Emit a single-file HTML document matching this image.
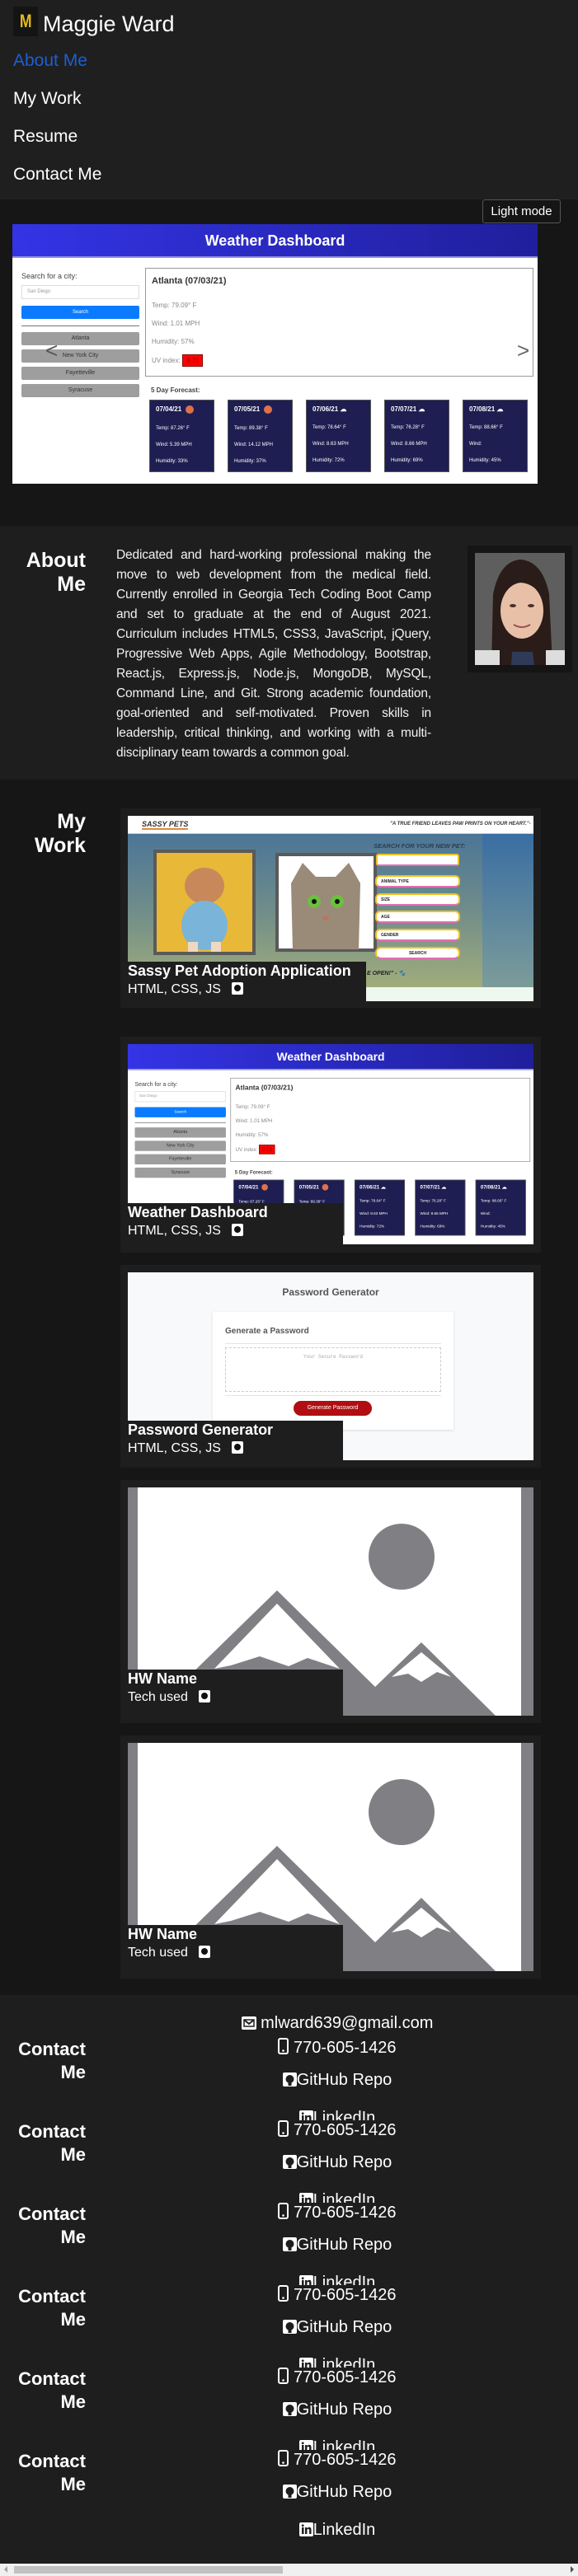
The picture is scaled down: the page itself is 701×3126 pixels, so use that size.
<!DOCTYPE html>
<html><head><meta charset="utf-8">
<style>
*{margin:0;padding:0;box-sizing:border-box}
html,body{width:701px;height:3126px;overflow:hidden;background:#161616;font-family:"Liberation Sans",sans-serif;color:#fff}
.a{position:absolute}
.hdr{left:0;top:0;width:701px;height:242px;background:#1f1f1f}
.nav{left:16px;font-size:21px;line-height:26px;color:#fff}
.wd{width:637px;height:315px;background:#fff;overflow:hidden;color:#444;font-family:"Liberation Sans",sans-serif}
.wd .hb{left:0;top:0;width:637px;height:41px;background:linear-gradient(90deg,#3434e6,#1f1f9c);text-align:center;font-weight:bold;font-size:18px;line-height:41px;color:#fff;border-bottom:2px solid #9090e0}
.cb{left:11px;width:143px;height:16px;background:#9e9e9e;border-radius:2px;font-size:7px;text-align:center;line-height:16px;color:#333}
.fc{top:213px;width:79px;height:88px;background:#1e1e52;border:1px solid #555;color:#fff;font-size:6px;padding:6px 7px}
.fc b{font-size:8px;display:block;margin-bottom:15px}
.fc div{margin-bottom:14px}
.sun{display:inline-block;width:10px;height:10px;border-radius:50%;background:#e0704a;vertical-align:middle;margin-left:5px}
.card{left:146px;width:510px;background:#1e1e1e}
.img{left:9px;top:9px;width:492px;overflow:hidden}
.cap{left:0;background:#1e1e1e;padding:0 0 0 0}
.cap .t{font-weight:bold;font-size:18px;line-height:22px;white-space:nowrap}
.cap .s{font-size:16px;line-height:24px;white-space:nowrap}
.gh{display:inline-block;width:14px;height:15px;background:#fff;border-radius:2px;vertical-align:-2px;margin-left:9px;position:relative}
.gh:after{content:"";position:absolute;left:3px;top:3px;width:8px;height:8px;border-radius:50%;background:#111}
.ch{left:0;width:104px;text-align:right;font-weight:bold;font-size:22px;line-height:28px}
.cl{left:141px;width:536px;text-align:center;font-size:20px;line-height:24px;white-space:nowrap}
.ico{display:inline-block;vertical-align:-2px}
</style></head><body>

<div class="a hdr"></div>
<div class="a" style="left:16px;top:8px;width:30px;height:36px;background:#141414"></div>
<div class="a" style="left:22px;top:13px;font-weight:bold;font-size:22px;color:#e6bb1c;font-family:'Liberation Sans Narrow','Liberation Sans',sans-serif;transform:scaleX(0.8)">M</div>
<div class="a" style="left:52px;top:13px;font-size:27px;line-height:32px">Maggie Ward</div>
<div class="a nav" style="top:61px;color:#1c5fd4">About Me</div>
<div class="a nav" style="top:107px">My Work</div>
<div class="a nav" style="top:153px">Resume</div>
<div class="a nav" style="top:199px">Contact Me</div>

<div class="a" style="left:585px;top:242px;width:95px;height:29px;border:1px solid #555;border-radius:3px;background:#151515;font-size:15px;line-height:27px;text-align:center">Light mode</div>

<!-- weather hero -->
<div class="a wd" id="w1" style="left:15px;top:272px">
 <div class="a hb">Weather Dashboard</div>
 <div class="a" style="left:11px;top:58px;font-size:9px;color:#444">Search for a city:</div>
 <div class="a" style="left:11px;top:74px;width:143px;height:17px;border:1px solid #ddd;font-size:6px;color:#999;line-height:15px;padding-left:6px">San Diego</div>
 <div class="a" style="left:11px;top:99px;width:143px;height:16px;background:#0a7bff;border-radius:2px;font-size:6px;color:#fff;text-align:center;line-height:16px">Search</div>
 <div class="a" style="left:11px;top:123px;width:143px;height:1px;background:#777"></div>
 <div class="a cb" style="top:131px">Atlanta</div>
 <div class="a cb" style="top:152px">New York City</div>
 <div class="a cb" style="top:173px">Fayetteville</div>
 <div class="a cb" style="top:194px">Syracuse</div>
 <div class="a" style="left:161px;top:53px;width:471px;height:132px;border:1px solid #999"></div>
 <div class="a" style="left:169px;top:63px;font-size:11px;font-weight:bold;color:#333">Atlanta (07/03/21)</div>
 <div class="a" style="left:169px;top:94px;font-size:8px;color:#888">Temp: 79.09° F</div>
 <div class="a" style="left:169px;top:116px;font-size:8px;color:#888">Wind: 1.01 MPH</div>
 <div class="a" style="left:169px;top:138px;font-size:8px;color:#888">Humidity: 57%</div>
 <div class="a" style="left:169px;top:161px;font-size:8px;color:#888">UV index: <span style="background:#f00;color:#900;padding:2px 4px;border:1px solid #800">9.71</span></div>
 <div class="a" style="left:168px;top:197px;font-size:8px;font-weight:bold;color:#444">5 Day Forecast:</div>
 <div class="a fc" style="left:166px"><b>07/04/21<span class="sun"></span></b><div>Temp: 87.26° F</div><div>Wind: 5.39 MPH</div><div>Humidity: 33%</div></div>
 <div class="a fc" style="left:261px"><b>07/05/21<span class="sun"></span></b><div>Temp: 89.38° F</div><div>Wind: 14.12 MPH</div><div>Humidity: 37%</div></div>
 <div class="a fc" style="left:356px"><b>07/06/21 ☁</b><div>Temp: 78.64° F</div><div>Wind: 8.63 MPH</div><div>Humidity: 72%</div></div>
 <div class="a fc" style="left:451px"><b>07/07/21 ☁</b><div>Temp: 76.28° F</div><div>Wind: 8.66 MPH</div><div>Humidity: 69%</div></div>
 <div class="a fc" style="left:546px"><b>07/08/21 ☁</b><div>Temp: 88.66° F</div><div>Wind:</div><div>Humidity: 45%</div></div>
 <div class="a" style="left:40px;top:138px;font-size:26px;color:#555">&lt;</div>
 <div class="a" style="left:612px;top:138px;font-size:26px;color:#666">&gt;</div>
</div>

<!-- about -->
<div class="a" style="left:0;top:638px;width:701px;height:308px;background:#1e1e1e"></div>
<div class="a ch" style="top:666px;font-size:25px;line-height:29px">About<br>Me</div>
<div class="a" style="left:141px;top:662px;width:382px;font-size:15.5px;letter-spacing:-0.15px;line-height:24px;text-align:justify;color:#f2f2f2">Dedicated and hard-working professional making the move to web development from the medical field. Currently enrolled in Georgia Tech Coding Boot Camp and set to graduate at the end of August 2021. Curriculum includes HTML5, CSS3, JavaScript, jQuery, Progressive Web Apps, Agile Methodology, Bootstrap, React.js, Express.js, Node.js, MongoDB, MySQL, Command Line, and Git. Strong academic foundation, goal-oriented and self-motivated. Proven skills in leadership, critical thinking, and working with a multi-disciplinary team towards a common goal.</div>
<div class="a" style="left:567px;top:662px;width:127px;height:154px;background:#151515"></div>
<svg class="a" style="left:576px;top:671px" width="109" height="136" viewBox="0 0 109 136">
 <rect width="109" height="136" fill="#5e5e5e"/>
 <path d="M20 136 L22 50 Q30 10 55 8 Q82 10 90 50 L94 136Z" fill="#2a1c18"/>
 <rect x="0" y="118" width="30" height="18" fill="#ddd"/><rect x="86" y="118" width="23" height="18" fill="#ddd"/>
 <ellipse cx="57" cy="70" rx="26" ry="34" fill="#e8c0a8"/>
 <path d="M30 55 Q40 22 62 22 Q80 26 84 55 Q70 35 52 36 Q38 40 30 55Z" fill="#2a1c18"/>
 <path d="M45 120 L70 120 L72 136 L44 136Z" fill="#2e3a58"/>
 <ellipse cx="46" cy="64" rx="4" ry="2" fill="#4a3028"/><ellipse cx="68" cy="64" rx="4" ry="2" fill="#4a3028"/>
 <path d="M47 87 Q57 93 67 87" stroke="#a05050" stroke-width="2" fill="none"/>
</svg>

<!-- my work -->
<div class="a ch" style="top:983px;font-size:25px;line-height:29px">My<br>Work</div>

<!-- card 1 sassy -->
<div class="a card" style="top:981px;height:242px">
 <div class="a img" style="height:225px;background:linear-gradient(180deg,#43709a 0%,#6f8c8a 50%,#a9b278 100%)">
  <div class="a" style="left:430px;top:22px;width:62px;height:186px;background:linear-gradient(180deg,#3a6ea2,#7c9c9a)"></div>
  <div class="a" style="left:0;top:0;width:492px;height:22px;background:#fff;border-bottom:1px solid #ccc"></div>
  <div class="a" style="left:17px;top:5px;font-size:9px;font-weight:bold;font-style:italic;color:#333;border-bottom:2px solid #e08a3a">SASSY PETS</div>
  <div class="a" style="left:318px;top:7px;font-size:6px;font-weight:bold;font-style:italic;color:#333">"A TRUE FRIEND LEAVES PAW PRINTS ON YOUR HEART."-</div>
  <div class="a" style="left:31px;top:41px;width:124px;height:128px;background:#e8b838;border:4px solid #5a5a5a"></div>
  <svg class="a" style="left:45px;top:55px" width="96" height="110"><ellipse cx="48" cy="30" rx="24" ry="22" fill="#c8885a"/><ellipse cx="48" cy="78" rx="28" ry="30" fill="#7ab4d8"/><rect x="28" y="98" width="12" height="12" fill="#f0d8c0"/><rect x="56" y="98" width="12" height="12" fill="#f0d8c0"/></svg>
  <div class="a" style="left:179px;top:45px;width:123px;height:120px;background:#fff;border:4px solid #5a5a5a"></div>
  <svg class="a" style="left:190px;top:52px" width="100" height="110"><path d="M10 110 L8 30 L22 5 L38 22 L62 22 L78 5 L92 30 L90 110Z" fill="#9a8a78"/><ellipse cx="36" cy="52" rx="8" ry="8" fill="#6cc040"/><ellipse cx="64" cy="52" rx="8" ry="8" fill="#6cc040"/><circle cx="36" cy="52" r="3" fill="#111"/><circle cx="64" cy="52" r="3" fill="#111"/><path d="M45 70 L55 70 L50 76Z" fill="#c07060"/></svg>
  <div class="a" style="left:298px;top:32px;font-size:7.5px;font-weight:bold;font-style:italic;color:#2a3d55">SEARCH FOR YOUR NEW PET:</div>
  <div class="a" style="left:301px;top:46px;width:101px;height:15px;background:#fff;border:2px solid #f0c020;border-bottom-color:#e070b0;border-radius:3px"></div>
  <div class="a" style="left:300px;top:72px;width:103px;height:15px;background:#fff;border:2px solid #f0c020;border-bottom-color:#e070b0;border-radius:6px;font-size:5px;font-weight:bold;padding:3px 5px;color:#222">ANIMAL TYPE</div>
  <div class="a" style="left:300px;top:94px;width:103px;height:15px;background:#fff;border:2px solid #f0c020;border-bottom-color:#e070b0;border-radius:6px;font-size:5px;font-weight:bold;padding:3px 5px;color:#222">SIZE</div>
  <div class="a" style="left:300px;top:115px;width:103px;height:15px;background:#fff;border:2px solid #f0c020;border-bottom-color:#e070b0;border-radius:6px;font-size:5px;font-weight:bold;padding:3px 5px;color:#222">AGE</div>
  <div class="a" style="left:300px;top:137px;width:103px;height:15px;background:#fff;border:2px solid #f0c020;border-bottom-color:#e070b0;border-radius:6px;font-size:5px;font-weight:bold;padding:3px 5px;color:#222">GENDER</div>
  <div class="a" style="left:300px;top:159px;width:103px;height:15px;background:#fff;border:2px solid #f0c020;border-bottom-color:#e070b0;border-radius:7px;font-size:5px;font-weight:bold;text-align:center;padding-top:3px;color:#222">SEARCH</div>
  <div class="a" style="left:290px;top:187px;font-size:7px;font-weight:bold;font-style:italic;color:#222">E OPEN!" - 🐾</div>
  <div class="a" style="left:0;top:208px;width:492px;height:17px;background:#eef8ee"></div>
 </div>
 <div class="a cap" style="left:9px;top:186px;width:289px;height:48px"><div class="t">Sassy Pet Adoption Application</div><div class="s">HTML, CSS, JS <span class="gh"></span></div></div>
</div>

<!-- card 2 weather -->
<div class="a card" style="top:1258px;height:262px">
 <div class="a img" style="height:243px">
  <div class="a wd" style="left:0;top:0;transform:scale(0.7724);transform-origin:0 0">
   <div class="a hb">Weather Dashboard</div>
   <div class="a" style="left:11px;top:58px;font-size:9px;color:#444">Search for a city:</div>
   <div class="a" style="left:11px;top:74px;width:143px;height:17px;border:1px solid #ddd;font-size:6px;color:#999;line-height:15px;padding-left:6px">San Diego</div>
   <div class="a" style="left:11px;top:99px;width:143px;height:16px;background:#0a7bff;border-radius:2px;font-size:6px;color:#fff;text-align:center;line-height:16px">Search</div>
   <div class="a" style="left:11px;top:123px;width:143px;height:1px;background:#777"></div>
   <div class="a cb" style="top:131px">Atlanta</div>
   <div class="a cb" style="top:152px">New York City</div>
   <div class="a cb" style="top:173px">Fayetteville</div>
   <div class="a cb" style="top:194px">Syracuse</div>
   <div class="a" style="left:161px;top:53px;width:471px;height:132px;border:1px solid #999"></div>
   <div class="a" style="left:169px;top:63px;font-size:11px;font-weight:bold;color:#333">Atlanta (07/03/21)</div>
   <div class="a" style="left:169px;top:94px;font-size:8px;color:#888">Temp: 79.09° F</div>
   <div class="a" style="left:169px;top:116px;font-size:8px;color:#888">Wind: 1.01 MPH</div>
   <div class="a" style="left:169px;top:138px;font-size:8px;color:#888">Humidity: 57%</div>
   <div class="a" style="left:169px;top:161px;font-size:8px;color:#888">UV index: <span style="background:#f00;color:#900;padding:2px 4px;border:1px solid #800">9.71</span></div>
   <div class="a" style="left:168px;top:197px;font-size:8px;font-weight:bold;color:#444">5 Day Forecast:</div>
   <div class="a fc" style="left:166px"><b>07/04/21<span class="sun"></span></b><div>Temp: 87.26° F</div><div>Wind: 5.39 MPH</div><div>Humidity: 33%</div></div>
   <div class="a fc" style="left:261px"><b>07/05/21<span class="sun"></span></b><div>Temp: 89.38° F</div><div>Wind: 14.12 MPH</div><div>Humidity: 37%</div></div>
   <div class="a fc" style="left:356px"><b>07/06/21 ☁</b><div>Temp: 78.64° F</div><div>Wind: 8.63 MPH</div><div>Humidity: 72%</div></div>
   <div class="a fc" style="left:451px"><b>07/07/21 ☁</b><div>Temp: 76.28° F</div><div>Wind: 8.66 MPH</div><div>Humidity: 69%</div></div>
   <div class="a fc" style="left:546px"><b>07/08/21 ☁</b><div>Temp: 88.66° F</div><div>Wind:</div><div>Humidity: 45%</div></div>
  </div>
 </div>
 <div class="a cap" style="left:9px;top:202px;width:261px;height:51px"><div class="t">Weather Dashboard</div><div class="s">HTML, CSS, JS <span class="gh"></span></div></div>
</div>

<!-- card 3 password -->
<div class="a card" style="top:1535px;height:246px">
 <div class="a img" style="height:228px;background:#f8f9fb">
  <div class="a" style="left:0;top:17px;width:492px;text-align:center;font-size:12px;font-weight:bold;color:#555">Password Generator</div>
  <div class="a" style="left:103px;top:48px;width:292px;height:143px;background:#fff;box-shadow:0 1px 3px rgba(0,0,0,.12)"></div>
  <div class="a" style="left:118px;top:66px;font-size:10px;font-weight:bold;color:#555">Generate a Password</div>
  <div class="a" style="left:118px;top:86px;width:262px;height:1px;background:#e5e5e5"></div>
  <div class="a" style="left:118px;top:91px;width:262px;height:54px;border:1px dashed #ccc;text-align:center;font-family:'Liberation Mono',monospace;font-size:6px;color:#aaa;padding-top:7px">Your Secure Password</div>
  <div class="a" style="left:118px;top:149px;width:262px;height:1px;background:#e5e5e5"></div>
  <div class="a" style="left:201px;top:156px;width:95px;height:18px;background:#b00e12;border-radius:9px;color:#fff;font-size:7px;text-align:center;line-height:18px">Generate Password</div>
 </div>
 <div class="a cap" style="left:9px;top:189px;width:261px;height:48px"><div class="t">Password Generator</div><div class="s">HTML, CSS, JS <span class="gh"></span></div></div>
</div>

<!-- placeholder cards -->
<div class="a card" style="top:1796px;height:295px">
 <svg class="a img" style="height:277px" width="492" height="277" viewBox="0 0 492 277">
  <rect width="492" height="277" fill="#fff"/><rect width="12" height="277" fill="#808084"/><rect x="477" width="15" height="277" fill="#808084"/>
  <ellipse cx="332" cy="84" rx="40" ry="40" fill="#808084"/>
  <polygon points="25,277 181,125 300,242 356,188 446,277" fill="#808084"/>
  <polygon points="105,220 181,141 257,220 218,207 195,217 160,205 125,216" fill="#fff"/>
  <polygon points="320,230 356,200 392,230 375,224 356,236 340,226" fill="#fff"/>
 </svg>
 <div class="a cap" style="left:9px;top:230px;width:261px;height:56px"><div class="t">HW Name</div><div class="s">Tech used <span class="gh"></span></div></div>
</div>
<div class="a card" style="top:2106px;height:295px">
 <svg class="a img" style="height:277px" width="492" height="277" viewBox="0 0 492 277">
  <rect width="492" height="277" fill="#fff"/><rect width="12" height="277" fill="#808084"/><rect x="477" width="15" height="277" fill="#808084"/>
  <ellipse cx="332" cy="84" rx="40" ry="40" fill="#808084"/>
  <polygon points="25,277 181,125 300,242 356,188 446,277" fill="#808084"/>
  <polygon points="105,220 181,141 257,220 218,207 195,217 160,205 125,216" fill="#fff"/>
  <polygon points="320,230 356,200 392,230 375,224 356,236 340,226" fill="#fff"/>
 </svg>
 <div class="a cap" style="left:9px;top:230px;width:261px;height:56px"><div class="t">HW Name</div><div class="s">Tech used <span class="gh"></span></div></div>
</div>

<!-- contact -->
<div class="a" style="left:0;top:2421px;width:701px;height:690px;background:#1e1e1e"></div>
<div class="a cl" style="top:2443px"><svg class="ico" width="18" height="16" viewBox="0 0 18 16"><rect width="18" height="16" rx="2" fill="#fff"/><path d="M3 4 L9 9 L15 4" stroke="#1e1e1e" stroke-width="2" fill="none"/><rect x="3" y="4" width="12" height="8" fill="none" stroke="#1e1e1e" stroke-width="1.5"/></svg> mlward639@gmail.com</div>

<div id="cblocks"></div>
<script>
var h='';
for(var k=0;k<6;k++){
 var T=2473+100*k;
 var H=(k<5)?100:140;
 h+='<div class="a" style="left:0;top:'+T+'px;width:701px;height:'+H+'px;overflow:hidden;background:#1e1e1e">'+
 '<div class="a ch" style="top:0px">Contact<br>Me</div>'+
 '<div class="a cl" style="top:0px"><svg class="ico" width="13" height="20" viewBox="0 0 13 20"><rect x="1" y="1" width="11" height="18" rx="2" fill="none" stroke="#fff" stroke-width="2"/><circle cx="6.5" cy="15.5" r="1.3" fill="#fff"/></svg> 770-605-1426</div>'+
 '<div class="a cl" style="top:39px"><svg class="ico" width="17" height="17" viewBox="0 0 17 17"><rect width="17" height="17" rx="2" fill="#fff"/><circle cx="8.5" cy="8" r="5" fill="#1e1e1e"/><rect x="6.5" y="10" width="4" height="6" fill="#1e1e1e"/></svg>GitHub Repo</div>'+
 '<div class="a cl" style="top:85px"><svg class="ico" width="17" height="17" viewBox="0 0 17 17"><rect width="17" height="17" rx="2" fill="#fff"/><rect x="3" y="6" width="2.5" height="8" fill="#1e1e1e"/><circle cx="4.2" cy="3.8" r="1.4" fill="#1e1e1e"/><path d="M7 6 h2.4 v1.2 q1-1.4 2.8-1.4 q2.3 0 2.3 3 v5.2 h-2.4 v-4.6 q0-1.4-1.2-1.4 q-1.5 0-1.5 1.6 v4.4 H7z" fill="#1e1e1e"/></svg>LinkedIn</div>'+
 '</div>';
}
document.getElementById('cblocks').innerHTML=h;
</script>

<!-- scrollbar -->
<div class="a" style="left:0;top:3111px;width:701px;height:15px;background:#f0f0f0"></div>
<div class="a" style="left:17px;top:3114px;width:326px;height:9px;background:#c1c1c1"></div>
<div class="a" style="left:5px;top:3114px;width:0;height:0;border-top:4px solid transparent;border-bottom:4px solid transparent;border-right:4px solid #a3a3a3"></div>
<div class="a" style="left:692px;top:3114px;width:0;height:0;border-top:4px solid transparent;border-bottom:4px solid transparent;border-left:4px solid #505050"></div>
</body></html>
